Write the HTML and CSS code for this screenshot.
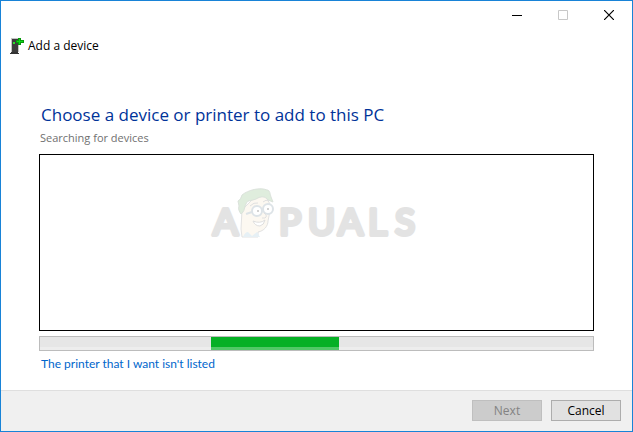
FILE: index.html
```html
<!doctype html>
<html lang="en">
<head>
	<meta charset="UTF-8">
	<meta name="viewport" content="width=device-width, initial-scale=1">
	<title>Add a device</title>
	<link rel="stylesheet" href="styles.css">
</head>
<body>
<div class="window">
	<!-- window buttons -->
	<div class="titlebar">
		<button type="button" class="win_btn" aria-label="Minimize">
			<svg width="10" height="10" viewBox="0 0 10 10"><path d="M0 5.5h10" stroke="#000"/></svg>
		</button>
		<button type="button" class="win_btn" aria-label="Maximize" disabled>
			<svg width="10" height="10" viewBox="0 0 10 10"><path d="M.5.5h9v9h-9z" fill="none" stroke="#c8c8c8"/></svg>
		</button>
		<button type="button" class="win_btn" aria-label="Close">
			<svg width="10" height="10" viewBox="0 0 10 10"><path d="M0 0l10 10M10 0L0 10" stroke="#000" stroke-width="1.2"/></svg>
		</button>
	</div>
	<header class="caption">
		<svg class="caption_icon" width="14" height="16" viewBox="0 0 14 16">
			<path d="M1 0h8v14H1z" fill="#c4c4c4"/>
			<path d="M2 1h6v13H2z" fill="#3c3c3c"/>
			<path d="M1 14h7v1H1zM0 15h9v1H0z" fill="#333"/>
			<path d="M3 4h2v2H3z" fill="#2be02b"/>
			<path d="M8 0h3v2h3v3h-3v2H8V5H6V2h2z" fill="#079a0b"/>
			<path d="M9 1h1v2h3v1h-3v2H9V4H7V3h2z" fill="#10d818"/>
		</svg>
		<span>Add a device</span>
	</header>

	<!-- page content -->
	<main class="content">
		<h1>Choose a device or printer to add to this PC</h1>
		<p class="status" id="status">Searching for devices</p>
		<div class="device_list">
			<svg class="watermark" width="212" height="64" viewBox="0 0 212 64">
				<text y="47" x="2 68 97 127 157 184">APUALS</text>
				<!-- face -->
				<path d="M31 22L30 41L31 49H47L47 44C53 43 57 38 57 33L60 18L54 7L41 12z" fill="#fcf8f1" stroke="#e2e2e2"/>
				<path d="M30 26C28 23 27 21 28 18L27 13C29 12 30 10 31 7C37 2 49-1 56 2C59 2 59 6 60 9L62 14L57 12C54 8 50 8 45 11C40 13 36 12 35 16C33 20 34 23 30 26z" fill="#dfeddd" stroke="#dbe2db"/>
				<g fill="#fff" stroke="#dde3e7" stroke-width="2">
					<circle cx="46" cy="23" r="5"/>
					<circle cx="57" cy="21" r="5"/>
					<path d="M35 26l6-2" fill="none"/>
				</g>
				<path d="M46 22h2v2h-2zM56 20h2v2h-2z" fill="#d2d2d2"/>
				<path d="M39 18q4-4 8-3M52 14q3-3 6-1M53 25q4 3 1 5h-3" fill="none" stroke="#e0e0e0"/>
				<path d="M42 33q7 3 12-1q-1 5-5 6q-5 0-7-5z" fill="#fff" stroke="#dedede"/>
				<path d="M32 49q2-5 5-5l4 4 5-4 3 5z" fill="#e6f0f5"/>
			</svg>
		</div>
		<div class="progress" role="progressbar" aria-labelledby="status">
			<div class="progress_bar"></div>
		</div>
		<a class="not_listed" href="#">The printer that I want isn't listed</a>
	</main>

	<!-- wizard buttons -->
	<footer class="footer">
		<button type="button" class="btn" disabled>Next</button>
		<button type="button" class="btn">Cancel</button>
	</footer>
</div>
</body>
</html>
```
FILE: styles.css
```css
*{margin:0;padding:0;box-sizing:border-box}
body{
	font-family:"Open Sans","Noto Sans",sans-serif;
	font-size:12px;
	line-height:16px;
	color:#000;
	background:#fff;
}
svg{display:block}
.window{
	display:flex;
	flex-direction:column;
	min-height:100vh;
	border:1px solid #1883d7;
}
.titlebar{
	display:flex;
	justify-content:flex-end;
}
.win_btn{
	display:flex;
	align-items:center;
	justify-content:center;
	width:46px;
	height:28px;
	border:0;
	background:transparent;
}
.caption{
	display:flex;
	align-items:center;
	gap:4px;
	padding:9px 9px 8px;
}
.content{
	flex:1;
	padding:41px 38px 16px;
}
.content h1{
	padding-left:2px;
	font-size:17px;
	font-weight:400;
	line-height:24px;
	color:#003399;
}
.status{
	padding:3px 1px 8px;
	font-size:11px;
	color:#707070;
}
.device_list{
	height:177px;
	padding:33px 0 0;
	border:1px solid #000;
	background:#fff;
}
.watermark{
	margin:0 auto;
	overflow:visible;
	font-family:Lato,sans-serif;
	font-size:37px;
	line-height:44px;
}
.watermark text{
	fill:#e3e3e3;
	stroke:#e3e3e3;
	stroke-width:4px;
	stroke-linejoin:round;
}
.progress{
	height:15px;
	margin:5px 0;
	border:1px solid #bcbcbc;
	background:linear-gradient(#e6e6e6 75%,#ededed 75%);
}
.progress_bar{
	width:23%;
	height:100%;
	margin-left:31%;
	background:linear-gradient(#06b025 75%,#51c866 75%);
}
.not_listed{
	display:inline-block;
	padding-left:2px;
	font-family:Lato,"Open Sans",sans-serif;
	color:#0066cc;
	text-decoration:none;
}
.footer{
	display:flex;
	justify-content:flex-end;
	gap:9px;
	padding:9px 11px 10px;
	border-top:1px solid #dfdfdf;
	background:#f0f0f0;
}
.btn{
	width:70px;
	height:21px;
	border:1px solid #adadad;
	background:#e1e1e1;
	font:inherit;
	line-height:16px;
	color:#000;
}
.btn:disabled{
	border-color:#bfbfbf;
	background:#ccc;
	color:#838383;
}
```
